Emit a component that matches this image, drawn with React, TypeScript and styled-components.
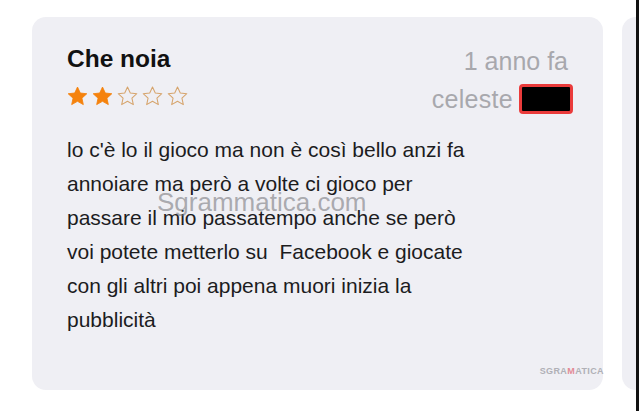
import styled, { createGlobalStyle } from 'styled-components'

const GlobalStyle = createGlobalStyle`
  html, body {
    margin: 0;
    padding: 0;
    background: #ffffff;
  }
  body {
    font-family: 'Liberation Sans', Arial, sans-serif;
    width: 639px;
    height: 411px;
    overflow: hidden;
  }
`

const Page = styled.div`
  display: flex;
  height: 411px;
  padding-top: 17px;
  box-sizing: border-box;
  overflow: hidden;
`

const Card = styled.div`
  position: relative;
  flex: none;
  width: 571px;
  height: 373px;
  margin-left: 32px;
  padding: 28px 35px 0 35px;
  box-sizing: border-box;
  background: #efeff4;
  border-radius: 14px;
`

const NextCard = styled.div`
  flex: none;
  width: 14px;
  height: 373px;
  margin-left: 19px;
  background: #efeff4;
  border-radius: 14px 0 0 14px;
`

const EdgeBar = styled.div`
  flex: none;
  width: 3px;
  height: 411px;
  margin-top: -17px;
  background: #111;
`

const Header = styled.div`
  display: flex;
  justify-content: space-between;
  align-items: flex-start;
`

const Title = styled.div`
  font-size: 24.5px;
  line-height: 28px;
  font-weight: 700;
  color: #111;
`

const Stars = styled.div`
  display: flex;
  gap: 4px;
  margin-top: 13px;
`

const Meta = styled.div`
  display: flex;
  flex-direction: column;
  align-items: flex-end;
  padding-top: 2px;
  gap: 9px;
  color: #a8a8ad;
  font-size: 25px;
`

const Time = styled.div`
  line-height: 28px;
`

const AuthorRow = styled.div`
  display: flex;
  align-items: center;
  gap: 6px;
  height: 30px;
  margin-right: -5px;
  letter-spacing: 0.3px;
`

const Redacted = styled.div`
  width: 48px;
  height: 24px;
  background: #000;
  border: 3px solid #ea3b3b;
  border-radius: 4px;
`

const Body = styled.div`
  margin-top: 19px;
  font-size: 21px;
  line-height: 34px;
  color: #1c1c1e;
`

const Line = styled.div`
  white-space: pre;
`

const Watermark = styled.div`
  position: absolute;
  left: 125px;
  top: 172px;
  font-size: 26px;
  line-height: 26px;
  color: rgba(110, 110, 115, 0.55);
  pointer-events: none;
`

const Logo = styled.div`
  position: absolute;
  right: -1px;
  top: 349px;
  font-size: 9px;
  font-weight: 700;
  letter-spacing: 0.4px;
  color: #b0b0b6;
  span {
    color: #e38a95;
  }
`

function Star({ filled }: { filled: boolean }) {
  return (
    <svg width="21" height="20" viewBox="0 0 24 23">
      <path
        d="M12 1.2l3.2 6.9 7.5.8-5.6 5.1 1.6 7.4L12 17.6l-6.7 3.8 1.6-7.4L1.3 8.9l7.5-.8z"
        fill={filled ? '#f5820d' : 'none'}
        stroke={filled ? '#f5820d' : '#d6a46c'}
        strokeWidth={filled ? 1 : 1.2}
        strokeLinejoin="round"
      />
    </svg>
  )
}

const lines = [
  "lo c'è lo il gioco ma non è così bello anzi fa",
  'annoiare ma però a volte ci gioco per',
  'passare il mio passatempo anche se però',
  'voi potete metterlo su  Facebook e giocate',
  'con gli altri poi appena muori inizia la',
  'pubblicità',
]

export default function App() {
  const rating = 2
  return (
    <>
      <GlobalStyle />
      <Page>
        <Card>
          <Header>
            <div>
              <Title>Che noia</Title>
              <Stars>
                {[0, 1, 2, 3, 4].map((i) => (
                  <Star key={i} filled={i < rating} />
                ))}
              </Stars>
            </div>
            <Meta>
              <Time>1 anno fa</Time>
              <AuthorRow>
                celeste
                <Redacted />
              </AuthorRow>
            </Meta>
          </Header>
          <Body>
            {lines.map((l) => (
              <Line key={l}>{l}</Line>
            ))}
          </Body>
          <Watermark>Sgrammatica.com</Watermark>
          <Logo>
            SGRA<span>M</span>ATICA
          </Logo>
        </Card>
        <NextCard />
        <EdgeBar />
      </Page>
    </>
  )
}
